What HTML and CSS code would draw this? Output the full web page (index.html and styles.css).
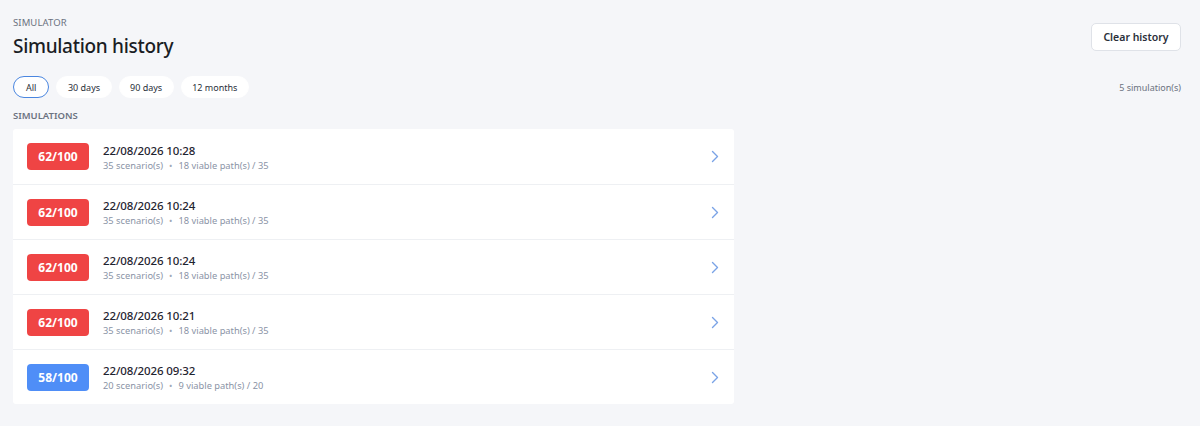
FILE: index.html
```html
<!DOCTYPE html>
<html>
<head>
<meta charset="utf-8">
<link rel="stylesheet" href="styles.css">
</head>
<body>
<div class="page">
  <div class="header">
    <div class="titles">
      <div class="eyebrow">SIMULATOR</div>
      <h1 class="title">Simulation history</h1>
    </div>
    <button class="clear-btn">Clear history</button>
  </div>
  <div class="filters">
    <div class="pills">
      <span class="pill active">All</span>
      <span class="pill">30 days</span>
      <span class="pill">90 days</span>
      <span class="pill">12 months</span>
    </div>
    <span class="count">5 simulation(s)</span>
  </div>
  <div class="section-label">SIMULATIONS</div>
  <div class="card">
    <div class="row">
      <span class="badge red">62/100</span>
      <div class="info"><div class="date">22/08/2026 10:28</div><div class="meta">35 scenario(s)<span class="dot">•</span>18 viable path(s) / 35</div></div>
      <svg class="chev" width="8" height="13" viewBox="0 0 8 13"><path d="M1.5 1.5 L6.5 6.5 L1.5 11.5" fill="none" stroke="#7aa3e6" stroke-width="1.4" stroke-linecap="round" stroke-linejoin="round"/></svg>
    </div>
    <div class="row">
      <span class="badge red">62/100</span>
      <div class="info"><div class="date">22/08/2026 10:24</div><div class="meta">35 scenario(s)<span class="dot">•</span>18 viable path(s) / 35</div></div>
      <svg class="chev" width="8" height="13" viewBox="0 0 8 13"><path d="M1.5 1.5 L6.5 6.5 L1.5 11.5" fill="none" stroke="#7aa3e6" stroke-width="1.4" stroke-linecap="round" stroke-linejoin="round"/></svg>
    </div>
    <div class="row">
      <span class="badge red">62/100</span>
      <div class="info"><div class="date">22/08/2026 10:24</div><div class="meta">35 scenario(s)<span class="dot">•</span>18 viable path(s) / 35</div></div>
      <svg class="chev" width="8" height="13" viewBox="0 0 8 13"><path d="M1.5 1.5 L6.5 6.5 L1.5 11.5" fill="none" stroke="#7aa3e6" stroke-width="1.4" stroke-linecap="round" stroke-linejoin="round"/></svg>
    </div>
    <div class="row">
      <span class="badge red">62/100</span>
      <div class="info"><div class="date">22/08/2026 10:21</div><div class="meta">35 scenario(s)<span class="dot">•</span>18 viable path(s) / 35</div></div>
      <svg class="chev" width="8" height="13" viewBox="0 0 8 13"><path d="M1.5 1.5 L6.5 6.5 L1.5 11.5" fill="none" stroke="#7aa3e6" stroke-width="1.4" stroke-linecap="round" stroke-linejoin="round"/></svg>
    </div>
    <div class="row">
      <span class="badge blue">58/100</span>
      <div class="info"><div class="date">22/08/2026 09:32</div><div class="meta">20 scenario(s)<span class="dot">•</span>9 viable path(s) / 20</div></div>
      <svg class="chev" width="8" height="13" viewBox="0 0 8 13"><path d="M1.5 1.5 L6.5 6.5 L1.5 11.5" fill="none" stroke="#7aa3e6" stroke-width="1.4" stroke-linecap="round" stroke-linejoin="round"/></svg>
    </div>
  </div>
</div>
</body>
</html>
```
FILE: styles.css
```css
* { box-sizing: border-box; }
html, body { margin: 0; padding: 0; }
body {
  background: #f5f6f9;
  font-family: "Noto Sans", "Open Sans", sans-serif;
  color: #1f2430;
  width: 1200px;
  height: 426px;
  overflow: hidden;
}
.page { padding: 16px 19px 0 13px; }
.header { display: flex; justify-content: space-between; align-items: flex-start; }
.eyebrow { font-size: 9.5px; color: #6b7280; letter-spacing: 0.1px; line-height: 14px; }
.title { margin: 3px 0 0; font-size: 19px; font-weight: 500; line-height: 26px; color: #1a1d24; letter-spacing: -0.3px; }
.clear-btn {
  margin-top: 7px;
  width: 90px; height: 28px;
  background: #fff;
  border: 1px solid #dfe2e8;
  border-radius: 5px;
  font-family: inherit;
  font-size: 10.5px;
  font-weight: 600;
  color: #2a2f3a;
  padding: 0;
}
.filters { display: flex; justify-content: space-between; align-items: center; margin-top: 17px; }
.pills { display: flex; gap: 7px; }
.pill {
  height: 22px;
  padding: 0 10.5px;
  display: inline-flex; align-items: center;
  background: #fff;
  border-radius: 11px;
  font-size: 9px;
  color: #2a2f3a;
  border: 1px solid #fff;
}
.pill.active { border: 1.5px solid #4a86e0; padding: 0 12px; }
.count { font-size: 9px; color: #6b7280; }
.section-label { margin-top: 11px; font-size: 9.5px; font-weight: 600; color: #6b7280; line-height: 14px; }
.card {
  margin-top: 6px;
  width: 721px;
  background: #fff;
  border-radius: 3px;
}
.row {
  height: 55px;
  display: flex; align-items: center;
  padding: 0 15px 0 14px;
  border-top: 1px solid #eef0f3;
}
.row:first-child { border-top: none; }
.badge {
  width: 62px; height: 27px;
  border-radius: 4px;
  display: inline-flex; align-items: center; justify-content: center;
  color: #fff; font-size: 12px; font-weight: 700;
  flex: none;
}
.badge.red { background: #ef4444; }
.badge.blue { background: #4f8ef7; }
.info { margin-left: 14px; flex: 1; padding-top: 2px; }
.date { font-size: 11.5px; font-weight: 500; color: #1f2430; line-height: 15px; letter-spacing: -0.1px; }
.meta { font-size: 9.3px; color: #8a93a6; line-height: 14px; margin-top: 1px; }
.dot { margin: 0 6px; font-size: 9px; vertical-align: 0; color: #a0a8b6; }
.chev { flex: none; }
```
